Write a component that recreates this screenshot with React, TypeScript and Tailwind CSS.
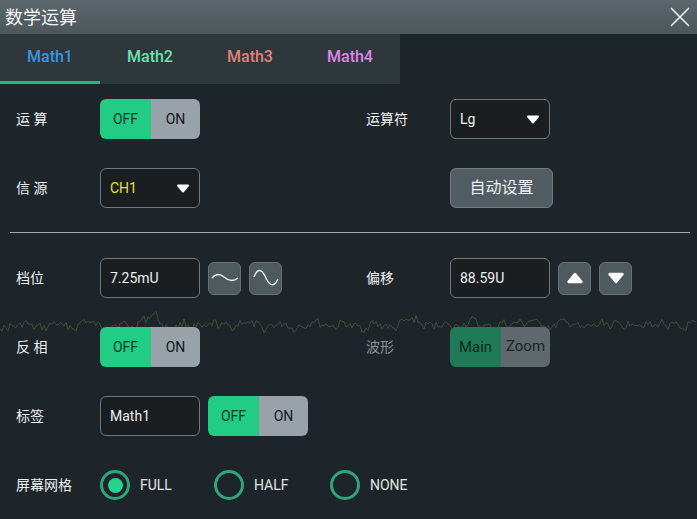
import type { ReactNode } from 'react'

const FONT = 'font-["Roboto","Noto_Sans_CJK_SC",sans-serif]'

// bruit du signal derrière le panneau
function buildTrace() {
  const bumps: [number, number, number][] = [
    [150, 9, 5], [158, 5, 3], [140, 4, 3], [85, 3, 6], [240, 3, 6], [320, 3, 9], [410, 4, 7], [420, 3, 6],
    [468, 3, 8], [520, 4, 5], [530, 3, 7], [560, 3, 6], [615, 3, 7], [645, 3, 8],
  ]
  let seed = 17
  const pts: string[] = []
  for (let x = 0; x <= 697; x += 2) {
    seed = (seed * 9301 + 49297) % 233280
    const n = (seed / 233280 - 0.5) * 8
    const wave = Math.sin(x / 5.1) * 2 + Math.sin(x / 2.3) * 1.4
    const bump = bumps.reduce((s, [c, h, w]) => s + h * Math.exp(-((x - c) * (x - c)) / (2 * w * w)), 0)
    pts.push(`${x},${(16 + n + wave - bump).toFixed(1)}`)
  }
  return pts.join(' ')
}

const TRACE = buildTrace()

function Caret({ up = false, size = 'small' }: { up?: boolean; size?: 'small' | 'large' }) {
  const cls = size === 'small' ? 'w-[14px] h-[9px]' : 'w-[18px] h-[12px]'
  return (
    <svg viewBox="0 0 14 9" className={cls}>
      <path
        d={up ? 'M2 7.5 L12 7.5 L7 1.5 Z' : 'M2 1.5 L12 1.5 L7 7.5 Z'}
        fill="#fff"
        stroke="#fff"
        strokeWidth="2"
        strokeLinejoin="round"
      />
    </svg>
  )
}

function Label({ children, dim = false }: { children: ReactNode; dim?: boolean }) {
  return <div className={`w-[84px] shrink-0 text-sm ${dim ? 'text-[#8b9193]' : 'text-[#eef0f0]'}`}>{children}</div>
}

function Toggle() {
  return (
    <div className="flex w-[100px] h-10 rounded-md overflow-hidden text-sm">
      <div className="w-[51px] flex items-center justify-center bg-[#22cc84] text-[#0b3a2a]">OFF</div>
      <div className="flex-1 flex items-center justify-center bg-[#98a2a8] text-[#10181c]">ON</div>
    </div>
  )
}

function Field({ children, caret = false, color = 'text-[#eef0f0]' }: { children: ReactNode; caret?: boolean; color?: string }) {
  return (
    <div className={`w-[100px] h-10 px-[9px] flex items-center justify-between rounded-md border border-[#6e777b] bg-[#1a1e21] text-sm ${color}`}>
      <span>{children}</span>
      {caret && <Caret />}
    </div>
  )
}

function IconButton({ children }: { children: ReactNode }) {
  return (
    <div className="w-[33px] h-[33px] flex items-center justify-center rounded-md border border-[#687276] bg-[#4f5a5e]">
      {children}
    </div>
  )
}

function Radio({ label, checked = false, width }: { label: string; checked?: boolean; width: string }) {
  return (
    <div className={`flex items-center gap-[10px] ${width}`}>
      <div className="w-[30px] h-[30px] rounded-full border-[3px] border-[#2fa57a] flex items-center justify-center">
        {checked && <div className="w-[15px] h-[15px] rounded-full bg-[#2bd08c]" />}
      </div>
      <span className="text-sm text-[#e2e5e5]">{label}</span>
    </div>
  )
}

function Half({ children }: { children: ReactNode }) {
  return <div className="w-[350px] shrink-0 pl-4 flex items-center">{children}</div>
}

export default function App() {
  const tabs = [
    { nom: 'Math1', couleur: 'text-[#3a94de]' },
    { nom: 'Math2', couleur: 'text-[#6ee0ac]' },
    { nom: 'Math3', couleur: 'text-[#de8278]' },
    { nom: 'Math4', couleur: 'text-[#de86ea]' },
  ]

  return (
    <div className={`relative w-[697px] h-[519px] overflow-hidden bg-[#1d252a] ${FONT}`}>
      <div className="h-[34px] pl-[5px] pr-[7px] flex items-center justify-between bg-gradient-to-b from-[#5c686d] to-[#4c575c]">
        <span className="text-[18px] text-[#f4f6f6]">数学运算</span>
        <svg viewBox="0 0 20 20" className="w-5 h-5" fill="none" stroke="#f5f7f7" strokeWidth="1.6">
          <path d="M1 1 L19 19 M19 1 L1 19" />
        </svg>
      </div>

      <div className="flex w-[400px] h-[50px] bg-[#2e373c]">
        {tabs.map((t, i) => (
          <div
            key={t.nom}
            className={`w-[100px] flex items-center justify-center text-base font-medium pb-[1px] border-b-[3px] ${t.couleur} ${
              i === 0 ? 'border-[#22b77e]' : 'border-transparent'
            }`}
          >
            {t.nom}
          </div>
        ))}
      </div>

      <svg viewBox="0 0 697 32" className="absolute left-0 top-[310px] w-[697px] h-8" fill="none">
        <polyline points={TRACE} stroke="#414d36" strokeWidth="1" />
      </svg>

      <div className="relative pt-[15px]">
        <div className="flex h-10">
          <Half>
            <Label>运 算</Label>
            <Toggle />
          </Half>
          <Half>
            <Label>运算符</Label>
            <Field caret>Lg</Field>
          </Half>
        </div>

        <div className="flex h-10 mt-[29px]">
          <Half>
            <Label>信 源</Label>
            <Field caret color="text-[#e4e03c]">CH1</Field>
          </Half>
          <Half>
            <div className="w-[84px] shrink-0" />
            <div className="w-[103px] h-10 flex items-center justify-center rounded-md border border-[#727c80] bg-[#515d62] text-base text-[#eef0f0]">
              自动设置
            </div>
          </Half>
        </div>

        <div className="ml-[10px] mr-[7px] mt-6 h-px bg-[#a3aaad]" />

        <div className="flex h-10 mt-[25px]">
          <Half>
            <Label>档位</Label>
            <Field>7.25mU</Field>
            <div className="flex gap-2 ml-2">
              <IconButton>
                <svg viewBox="0 0 28 16" className="w-7 h-4" fill="none" stroke="#f0f2f2" strokeWidth="1.3">
                  <path d="M1 8 C5 3.5 9 3.5 13 7 C17 10.5 22 12 27 8" />
                </svg>
              </IconButton>
              <IconButton>
                <svg viewBox="0 0 26 20" className="w-[26px] h-5" fill="none" stroke="#f0f2f2" strokeWidth="1.3">
                  <path d="M1 9 C4 1 8 0 12 8 C15 15 20 22 25 11" />
                </svg>
              </IconButton>
            </div>
          </Half>
          <Half>
            <Label>偏移</Label>
            <Field>88.59U</Field>
            <div className="flex gap-2 ml-2">
              <IconButton>
                <Caret up size="large" />
              </IconButton>
              <IconButton>
                <Caret size="large" />
              </IconButton>
            </div>
          </Half>
        </div>

        <div className="flex h-10 mt-[29px]">
          <Half>
            <Label>反 相</Label>
            <Toggle />
          </Half>
          <Half>
            <Label dim>波形</Label>
            <div className="flex w-[100px] h-10 rounded-md overflow-hidden text-[15px]">
              <div className="w-[51px] flex items-center justify-center bg-[#1f7a58] text-[#0e2a22]">Main</div>
              <div className="flex-1 flex items-center justify-center bg-[#5f696d] text-[#1a2327] pb-[2px]">Zoom</div>
            </div>
          </Half>
        </div>

        <div className="flex h-10 mt-[29px]">
          <Half>
            <Label>标签</Label>
            <Field>Math1</Field>
            <div className="ml-2">
              <Toggle />
            </div>
          </Half>
        </div>

        <div className="flex h-10 mt-[29px] pl-4 items-center">
          <Label>屏幕网格</Label>
          <Radio label="FULL" checked width="w-[114px]" />
          <Radio label="HALF" width="w-[116px]" />
          <Radio label="NONE" width="w-[100px]" />
        </div>
      </div>
    </div>
  )
}
